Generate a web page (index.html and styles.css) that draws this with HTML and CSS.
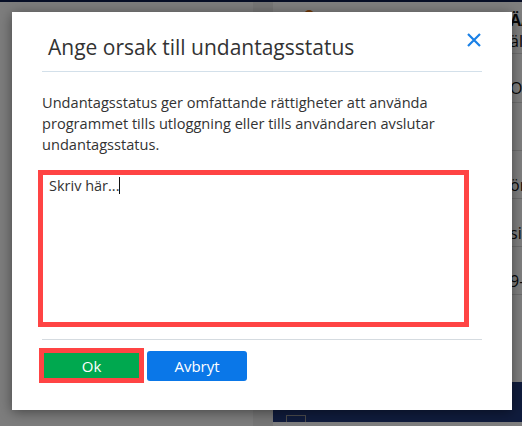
FILE: index.html
```html
<!DOCTYPE html>
<html lang="sv">
<head>
    <meta charset="UTF-8">
    <meta name="viewport" content="width=device-width, initial-scale=1.0">
    <title>Undantagsstatus</title>
    <link rel="stylesheet" href="styles.css">
</head>
<body>
    <div class="app">
        <div class="pane-left"></div>
        <div class="pane-gutter"></div>
        <div class="pane-right">
            <div class="right-top">
                <span class="dot"></span>
                <div class="right-head">
                    <div class="head-big">ÄÅ</div>
                    <div class="head-small">äl</div>
                </div>
            </div>
            <div class="list">
                <div class="list-row">Ov,</div>
                <div class="list-row"></div>
                <div class="list-row">ör</div>
                <div class="list-row">si</div>
                <div class="list-row">9-</div>
            </div>
            <div class="bottom-bar">
                <span class="bar-box"></span>
            </div>
        </div>
    </div>

    <div class="overlay"></div>

    <div class="modal">
        <div class="modal-header">
            <h2 class="modal-title">Ange orsak till undantagsstatus</h2>
            <button class="close-btn" aria-label="Stäng">
                <svg width="16" height="16" viewBox="0 0 16 16">
                    <path d="M2 2 L14 14 M14 2 L2 14" stroke="#1a80e6" stroke-width="2.2" fill="none"/>
                </svg>
            </button>
        </div>
        <div class="modal-body">
            <p class="info">Undantagsstatus ger omfattande rättigheter att använda programmet tills utloggning eller tills användaren avslutar undantagsstatus.</p>
            <div class="reason">Skriv här...<span class="caret"></span></div>
        </div>
        <div class="modal-footer">
            <button class="btn btn-ok">Ok</button>
            <button class="btn btn-cancel">Avbryt</button>
        </div>
    </div>
</body>
</html>
```

FILE: styles.css
```css
body {
    margin: 0;
    font-family: "Open Sans", "Noto Sans", sans-serif;
    overflow: hidden;
}
.app {
    display: flex;
    height: 424px;
    border-top: 2px solid #0d1d4d;
    background-color: #fafafa;
}
.pane-left {
    width: 253px;
    background-color: #fbfbfb;
}
.pane-gutter {
    width: 20px;
    background-color: #ececec;
}
.pane-right {
    flex: 1;
    display: flex;
    flex-direction: column;
    background-color: #ffffff;
    font-size: 16px;
    color: #111;
}
.right-top {
    height: 51px;
    display: flex;
    border-bottom: 1px solid #ddd;
}
.dot {
    width: 10px;
    height: 10px;
    border-radius: 50%;
    background-color: #e07010;
    margin: 8px 0 0 31px;
}
.right-head {
    margin-left: auto;
    width: 12px;
    padding-top: 8px;
    overflow: hidden;
    white-space: nowrap;
    line-height: 21px;
}
.head-big {
    font-weight: bold;
}
.list {
    flex: 1;
    display: flex;
    flex-direction: column;
    align-items: flex-end;
}
.list-row {
    width: 12px;
    height: 48px;
    box-sizing: border-box;
    padding-top: 24px;
    line-height: 20px;
    border-bottom: 1px solid #ddd;
    white-space: nowrap;
    overflow: hidden;
}
.list-row:first-child {
    height: 49px;
}
.bottom-bar {
    height: 40px;
    margin-top: auto;
    margin-bottom: 4px;
    background-color: #21387a;
    display: flex;
    align-items: flex-end;
}
.bar-box {
    width: 18px;
    height: 6px;
    border: 1px solid #999;
    border-bottom: none;
    margin-left: 13px;
}
.overlay {
    position: absolute;
    inset: 0;
    background-color: rgba(0, 0, 0, 0.5);
}
.modal {
    position: absolute;
    left: 12px;
    top: 12px;
    width: 500px;
    height: 398px;
    background-color: #fff;
    box-shadow: 0 2px 12px rgba(0, 0, 0, 0.45);
    box-sizing: border-box;
    padding: 0 30px;
    color: #333;
}
.modal-header {
    height: 59px;
    display: flex;
    align-items: center;
    border-bottom: 1px solid #d3e0ea;
    padding-left: 6px;
}
.modal-title {
    margin: 0;
    font-size: 21px;
    font-weight: 400;
    padding-top: 10px;
    flex: 1;
}
.close-btn {
    border: none;
    background: none;
    padding: 0;
    width: 16px;
    height: 16px;
    margin-bottom: 4px;
}
.modal-body {
    padding-top: 20px;
}
.info {
    margin: 0;
    font-size: 14.6px;
    line-height: 21px;
}
.reason {
    margin: 15px 13px 0 -4px;
    height: 145px;
    border: 5px solid #ff4444;
    padding: 1px 6px;
    font-size: 14.5px;
    line-height: 20px;
    color: #333;
}
.caret {
    display: inline-block;
    width: 1px;
    height: 17px;
    background-color: #111;
    vertical-align: -3px;
}
.modal-footer {
    margin-top: 12px;
    border-top: 1px solid #d5dbe0;
    padding-top: 8px;
    display: flex;
    align-items: center;
    gap: 3px;
}
.btn {
    border: none;
    color: #fff;
    font-family: inherit;
    font-size: 15px;
    cursor: pointer;
}
.btn-ok {
    width: 105px;
    height: 35px;
    margin-left: -3px;
    background-color: #00a84f;
    border: 5px solid #ff4444;
}
.btn-cancel {
    width: 100px;
    height: 30px;
    background-color: #0a77e8;
    border-radius: 3px;
}
```
